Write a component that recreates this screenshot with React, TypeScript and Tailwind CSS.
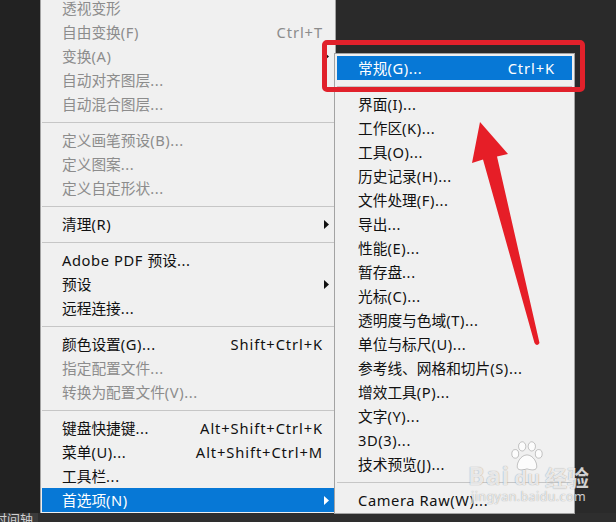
import React from "react";

type Item =
  | { label: string; shortcut?: string; disabled?: boolean; sub?: boolean; active?: boolean }
  | "sep";

const mainMenu: Item[] = [
  { label: "透视变形", disabled: true },
  { label: "自由变换(F)", shortcut: "Ctrl+T", disabled: true },
  { label: "变换(A)", disabled: true, sub: true },
  { label: "自动对齐图层...", disabled: true },
  { label: "自动混合图层...", disabled: true },
  "sep",
  { label: "定义画笔预设(B)...", disabled: true },
  { label: "定义图案...", disabled: true },
  { label: "定义自定形状...", disabled: true },
  "sep",
  { label: "清理(R)", sub: true },
  "sep",
  { label: "Adobe PDF 预设..." },
  { label: "预设", sub: true },
  { label: "远程连接..." },
  "sep",
  { label: "颜色设置(G)...", shortcut: "Shift+Ctrl+K" },
  { label: "指定配置文件...", disabled: true },
  { label: "转换为配置文件(V)...", disabled: true },
  "sep",
  { label: "键盘快捷键...", shortcut: "Alt+Shift+Ctrl+K" },
  { label: "菜单(U)...", shortcut: "Alt+Shift+Ctrl+M" },
  { label: "工具栏..." },
  { label: "首选项(N)", sub: true, active: true },
];

const prefMenu: Item[] = [
  { label: "常规(G)...", shortcut: "Ctrl+K", active: true },
  "sep",
  { label: "界面(I)..." },
  { label: "工作区(K)..." },
  { label: "工具(O)..." },
  { label: "历史记录(H)..." },
  { label: "文件处理(F)..." },
  { label: "导出..." },
  { label: "性能(E)..." },
  { label: "暂存盘..." },
  { label: "光标(C)..." },
  { label: "透明度与色域(T)..." },
  { label: "单位与标尺(U)..." },
  { label: "参考线、网格和切片(S)..." },
  { label: "增效工具(P)..." },
  { label: "文字(Y)..." },
  { label: "3D(3)..." },
  { label: "技术预览(J)..." },
  "sep",
  { label: "Camera Raw(W)..." },
];

// latin runs are a little wider in the original UI font, so give them some tracking
function Label({ text }: { text: string }) {
  const parts = text.split(/([\u3000-\u303f\u4e00-\u9fff]+)/);
  return (
    <>
      {parts.map((p, i) =>
        /[\u3000-\u303f\u4e00-\u9fff]/.test(p) ? (
          <span key={i}>{p}</span>
        ) : (
          <span key={i} className="tracking-[0.6px]">
            {p}
          </span>
        )
      )}
    </>
  );
}

function Arrow({ white }: { white?: boolean }) {
  return (
    <svg width="5" height="9" viewBox="0 0 5 9" className="block">
      <path d="M0 0 L5 4.5 L0 9 Z" fill={white ? "#ffffff" : "#111111"} />
    </svg>
  );
}

function MenuRows({ items, pl, pr }: { items: Item[]; pl: string; pr: string }) {
  return (
    <>
      {items.map((item, i) => {
        if (item === "sep") {
          return (
            <div key={i} className="h-[12px] flex items-center">
              <div className="h-px w-full bg-[#c6c6c6]" />
            </div>
          );
        }
        const color = item.active
          ? "bg-[#0778d6] text-white"
          : item.disabled
          ? "text-[#8c8c8c]"
          : "text-[#111111]";
        return (
          <div key={i} className={`h-[24px] flex items-center ${pl} ${pr} ${color}`}>
            <span className="flex-1 whitespace-nowrap">
              <Label text={item.label} />
            </span>
            {item.shortcut && (
              <span className="mr-[1px] whitespace-nowrap tracking-[0.9px]">{item.shortcut}</span>
            )}
            <span className="w-[5px] flex items-center">{item.sub && <Arrow white={item.active} />}</span>
          </div>
        );
      })}
    </>
  );
}

function Watermark() {
  return (
    <div className="absolute left-[468px] top-[441px] flex flex-col items-center text-white/80 [text-shadow:0_0_1px_rgba(0,0,0,0.45)]">
      <div className="flex items-end leading-none">
        <span className="text-[25px] font-bold tracking-[1px]">Bai</span>
        <div className="relative w-[34px] h-[47px] flex flex-col items-center justify-end">
          <svg width="32" height="30" viewBox="0 0 30 28" className="absolute top-0 left-[1px]">
            <g fill="rgba(255,255,255,0.8)" stroke="rgba(0,0,0,0.25)" strokeWidth="0.8">
              <ellipse cx="4" cy="12" rx="3.2" ry="4" />
              <ellipse cx="10.5" cy="5" rx="3.4" ry="4.3" />
              <ellipse cx="19.5" cy="5" rx="3.4" ry="4.3" />
              <ellipse cx="26" cy="12" rx="3.2" ry="4" />
              <path d="M15 13 C 9 13, 5 21, 6 25 C 7 28, 12 27, 15 26 C 18 27, 23 28, 24 25 C 25 21, 21 13, 15 13 Z" />
            </g>
          </svg>
          <span className="relative text-[20px] font-bold">du</span>
        </div>
        <span className="text-[22px] font-bold ml-[1px]">经验</span>
      </div>
      <span className="text-[12.5px] leading-none mt-[3px] tracking-[0.4px]">jingyan.baidu.com</span>
    </div>
  );
}

export default function App() {
  return (
    <div
      className="relative w-[616px] h-[522px] overflow-hidden bg-[#2a2a2a] flex flex-col text-[14.7px] leading-none"
      style={{ fontFamily: '"Noto Sans", "Noto Sans CJK SC", sans-serif' }}
    >
      <div className="h-[513px] flex items-start overflow-hidden">
        <div className="w-[40px] h-full bg-[#222222]" />
        <div className="-mt-[6px] w-[296px] bg-[#f0f0f0] border border-[#a3a3a3] py-[1px] px-[1px]">
          <MenuRows items={mainMenu} pl="pl-[20px]" pr="pr-[5px]" />
        </div>
      </div>

      <div className="h-[9px] flex">
        <div className="w-[38px] h-full bg-[#3b3b3b] overflow-hidden">
          <div className="-ml-[6px] text-[13px] leading-[13px] text-[#cfcfcf] whitespace-nowrap">时间轴</div>
        </div>
        <div className="flex-1 bg-[#2e2e2e]" />
      </div>

      {/* flyout submenu */}
      <div className="absolute left-[334px] top-[53px] w-[241px] bg-[#f0f0f0] border border-[#a3a3a3] pt-[2px] pb-px px-[2px]">
        <MenuRows items={prefMenu} pl="pl-[21px]" pr="pr-[11px]" />
      </div>

      {/* annotation box */}
      <div className="absolute left-[322px] top-[40px] w-[263px] h-[52px] border-[5px] border-[#e1212b] rounded-[5px]" />

      {/* annotation arrow */}
      <svg className="absolute left-0 top-0 pointer-events-none" width="616" height="522" viewBox="0 0 616 522">
        <path
          d="M480 122 L472 163 L483 159.5 L534.5 343 Q537 347 539.5 343 L497 156.5 L508 154 Z"
          fill="#e61e27"
        />
      </svg>

      <Watermark />
    </div>
  );
}
